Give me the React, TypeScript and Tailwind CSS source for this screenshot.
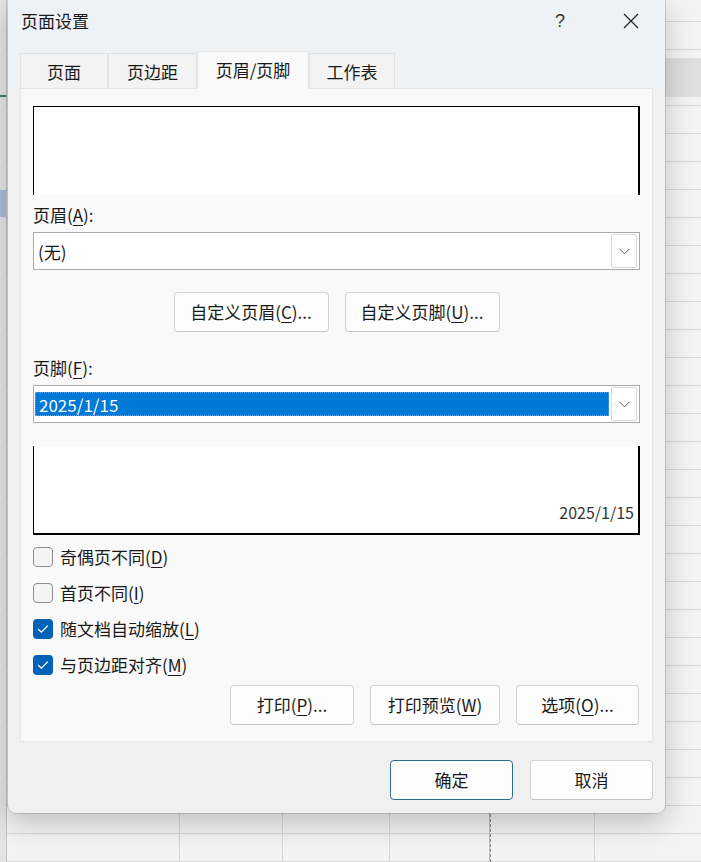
import React from "react";

function U({ children }: { children: React.ReactNode }) {
    return <span className="underline underline-offset-[3px] decoration-1">{children}</span>;
}

function Chevron() {
    return (
        <svg width="11" height="7" viewBox="0 0 11 7" fill="none">
            <path d="M0.5 0.8L5.5 5.8L10.5 0.8" stroke="#5a5a5a" strokeWidth="1" />
        </svg>
    );
}

function Check() {
    return (
        <svg width="12" height="10" viewBox="0 0 12 10" fill="none">
            <path d="M1.2 5.2L4.4 8.2L10.8 1.6" stroke="#ffffff" strokeWidth="1.3" />
        </svg>
    );
}

function DialogButton({ children, width, primary }: { children: React.ReactNode, width: string, primary?: boolean }) {
    const border = primary ? "border-[#2c6c88]" : "border-[#d3d3d3] border-b-[#c4c4c4]";
    return (
        <button className={`${width} h-[40px] rounded-[4px] border ${border} bg-[#fdfdfd] text-[17px] leading-none text-[#1a1a1a] flex items-center justify-center pb-[1px]`}>
            {children}
        </button>
    );
}

function CheckRow({ checked, children }: { checked?: boolean, children: React.ReactNode }) {
    return (
        <div className="h-[36px] flex items-center gap-[7px]">
            {checked ? (
                <div className="w-[20px] h-[20px] rounded-[4px] bg-[#0062b4] flex items-center justify-center"><Check /></div>
            ) : (
                <div className="w-[20px] h-[20px] rounded-[4px] border border-[#8e8e8e] bg-[#f4f4f4]" />
            )}
            <span className="text-[17px] leading-none -mt-[2px]">{children}</span>
        </div>
    );
}

function SelectBox({ children, selected }: { children: React.ReactNode, selected?: boolean }) {
    return (
        <div className="h-[38px] border border-[#aaaaaa] bg-white flex items-center">
            {selected ? (
                <div className="flex-1 self-stretch my-[6px] ml-[1px] bg-[#0078d7] border border-dotted border-[#5aa6e6] text-white text-[17px] leading-none pl-[3px] flex items-center">
                    {children}
                </div>
            ) : (
                <div className="flex-1 pl-[4px] text-[17px] leading-none">{children}</div>
            )}
            <div className="w-[26px] h-[34px] mx-[2px] border border-[#d8d8d8] rounded-[2px] bg-white flex items-center justify-center">
                <Chevron />
            </div>
        </div>
    );
}

function Background() {
    return (
        <div className="absolute inset-0 flex bg-[#f3f3f3] bg-[linear-gradient(to_bottom,#d6d6d6_1px,transparent_1px)] bg-[length:100%_28px] bg-[position:0_21px]">
            <div className="w-[7px] border-r border-[#c4c4c4] bg-[#e4e4e4] flex flex-col">
                <div className="h-[95px]" />
                <div className="h-[2px] bg-[#3f7a5a]" />
                <div className="h-[93px]" />
                <div className="h-[27px] bg-[#a9bcd8]" />
            </div>
            <div className="w-[173px] border-r border-[#d6d6d6]" />
            <div className="w-[103px] border-r border-[#d6d6d6]" />
            <div className="w-[107px] border-r border-[#d6d6d6]" />
            <div className="w-[101px] border-r border-dashed border-[#8a8a8a]" />
            <div className="w-[104px] border-r border-[#d6d6d6]" />
            <div className="flex-1 flex flex-col border-l border-[#bdbdbd] ml-[-106px] pl-[106px]">
                <div className="h-[58px]" />
                <div className="h-[39px] bg-[#dedede]" />
            </div>
        </div>
    );
}

export default function App() {
    const tabs = [
        { label: "页面", w: "w-[88px]" },
        { label: "页边距", w: "w-[89px]" },
        { label: "页眉/页脚", w: "w-[112px]", active: true },
        { label: "工作表", w: "w-[86px]" },
    ];

    return (
        <div className="relative w-[701px] h-[862px] overflow-hidden text-[#1a1a1a] font-['Noto_Sans_CJK_SC','Microsoft_YaHei',sans-serif]">
            <Background />

            <div className="absolute left-[8px] top-0 w-[657px] h-[813px] rounded-b-[8px] bg-[#f0f0f0] shadow-[0_0_0_1px_rgba(0,0,0,0.12),0_10px_28px_rgba(0,0,0,0.22)] flex flex-col overflow-hidden">
                {/* title bar */}
                <div className="h-[45px] bg-[#edf2f7] flex items-center pl-[13px]">
                    <span className="text-[17px] leading-none -mt-[4px]">页面设置</span>
                    <div className="flex-1" />
                    <span className="text-[18px] leading-none font-light font-['Liberation_Sans',sans-serif] text-[#333] -mt-[4px]">?</span>
                    <svg className="ml-[58px] mr-[26px] -mt-[4px]" width="16" height="16" viewBox="0 0 16 16" fill="none">
                        <path d="M1 1L15 15M15 1L1 15" stroke="#222" strokeWidth="1.2" />
                    </svg>
                </div>

                {/* tabs */}
                <div className="h-[43px] bg-[#eff2f5] flex items-end px-[12px]">
                    {tabs.map((tab) => tab.active ? (
                        <div key={tab.label} className={`${tab.w} h-[38px] -mb-px z-10 bg-[#f9f9f9] border border-b-0 border-[#e6e6e6] flex items-center justify-center pb-[2px] text-[17px] leading-none`}>
                            {tab.label}
                        </div>
                    ) : (
                        <div key={tab.label} className={`${tab.w} h-[35px] bg-[#f3f3f3] border border-b-0 border-[#e3e3e3] flex items-center justify-center text-[17px] leading-none`}>
                            {tab.label}
                        </div>
                    ))}
                </div>

                {/* panel */}
                <div className="mx-[12px] h-[654px] bg-[#f9f9f9] border border-[#e6e6e6] px-[12px] flex flex-col">
                    <div className="mt-[17px] h-[89px] bg-white border-t border-l border-r-2 border-black" />

                    <div className="mt-[9px] h-[20px] flex items-center text-[17px] leading-none">页眉(<U>A</U>):</div>
                    <div className="mt-[8px]"><SelectBox>(无)</SelectBox></div>

                    <div className="mt-[22px] flex justify-center gap-[16px]">
                        <DialogButton width="w-[155px]">自定义页眉(<U>C</U>)...</DialogButton>
                        <DialogButton width="w-[155px]">自定义页脚(<U>U</U>)...</DialogButton>
                    </div>

                    <div className="mt-[25px] h-[20px] flex items-center text-[17px] leading-none">页脚(<U>F</U>):</div>
                    <div className="mt-[8px]"><SelectBox selected>2025/1/15</SelectBox></div>

                    <div className="mt-[23px] h-[89px] bg-white border-l border-r-2 border-b-2 border-black flex items-end justify-end pr-[4px] pb-[13px]">
                        <span className="text-[16px] leading-none text-[#333]">2025/1/15</span>
                    </div>

                    <div className="mt-[4px] flex flex-col">
                        <CheckRow>奇偶页不同(<U>D</U>)</CheckRow>
                        <CheckRow>首页不同(<U>I</U>)</CheckRow>
                        <CheckRow checked>随文档自动缩放(<U>L</U>)</CheckRow>
                        <CheckRow checked>与页边距对齐(<U>M</U>)</CheckRow>
                    </div>

                    <div className="mt-[2px] flex justify-end gap-[16px] pr-[1px]">
                        <DialogButton width="w-[124px]">打印(<U>P</U>)...</DialogButton>
                        <DialogButton width="w-[130px]">打印预览(<U>W</U>)</DialogButton>
                        <DialogButton width="w-[123px]">选项(<U>O</U>)...</DialogButton>
                    </div>
                </div>

                {/* footer */}
                <div className="mt-[18px] flex justify-end gap-[17px] pr-[12px]">
                    <DialogButton width="w-[123px]" primary>确定</DialogButton>
                    <DialogButton width="w-[123px]">取消</DialogButton>
                </div>
            </div>
        </div>
    );
}
